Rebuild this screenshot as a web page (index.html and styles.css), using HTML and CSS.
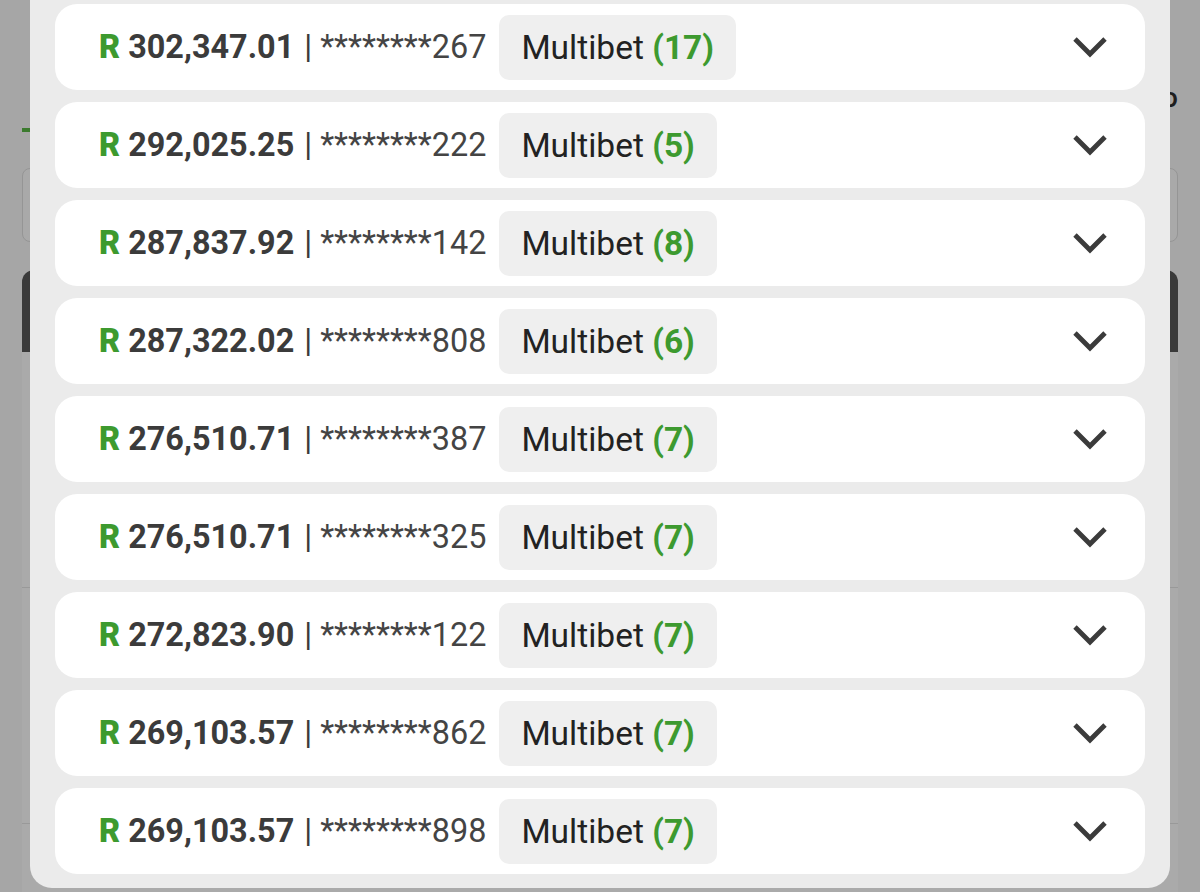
FILE: index.html
```html
<!DOCTYPE html>
<html lang="en">
<head>
<meta charset="utf-8">
<title>Multibet list</title>
<link rel="stylesheet" href="styles.css">
</head>
<body>
<div class="page">
  <div class="bg-header"><span class="bg-title">Info</span></div>
  <div class="bg-tabs"><span class="bg-tab-line"></span></div>
  <div class="bg-input"></div>
  <div class="bg-card"></div>
  <div class="bg-list">
    <div class="bg-item"></div>
    <div class="bg-item"></div>
    <div class="bg-item"></div>
  </div>
</div>

<div class="modal">
  <div class="list">
    <div class="row"><span class="amount"><b class="cur">R</b> 302,347.01</span><span class="sep">|</span><span class="acct">********267</span><span class="badge">Multibet <b>(17)</b></span><svg class="chev" viewBox="0 0 36 22"><path d="M3 3 L18 18 L33 3"/></svg></div>
    <div class="row"><span class="amount"><b class="cur">R</b> 292,025.25</span><span class="sep">|</span><span class="acct">********222</span><span class="badge">Multibet <b>(5)</b></span><svg class="chev" viewBox="0 0 36 22"><path d="M3 3 L18 18 L33 3"/></svg></div>
    <div class="row"><span class="amount"><b class="cur">R</b> 287,837.92</span><span class="sep">|</span><span class="acct">********142</span><span class="badge">Multibet <b>(8)</b></span><svg class="chev" viewBox="0 0 36 22"><path d="M3 3 L18 18 L33 3"/></svg></div>
    <div class="row"><span class="amount"><b class="cur">R</b> 287,322.02</span><span class="sep">|</span><span class="acct">********808</span><span class="badge">Multibet <b>(6)</b></span><svg class="chev" viewBox="0 0 36 22"><path d="M3 3 L18 18 L33 3"/></svg></div>
    <div class="row"><span class="amount"><b class="cur">R</b> 276,510.71</span><span class="sep">|</span><span class="acct">********387</span><span class="badge">Multibet <b>(7)</b></span><svg class="chev" viewBox="0 0 36 22"><path d="M3 3 L18 18 L33 3"/></svg></div>
    <div class="row"><span class="amount"><b class="cur">R</b> 276,510.71</span><span class="sep">|</span><span class="acct">********325</span><span class="badge">Multibet <b>(7)</b></span><svg class="chev" viewBox="0 0 36 22"><path d="M3 3 L18 18 L33 3"/></svg></div>
    <div class="row"><span class="amount"><b class="cur">R</b> 272,823.90</span><span class="sep">|</span><span class="acct">********122</span><span class="badge">Multibet <b>(7)</b></span><svg class="chev" viewBox="0 0 36 22"><path d="M3 3 L18 18 L33 3"/></svg></div>
    <div class="row"><span class="amount"><b class="cur">R</b> 269,103.57</span><span class="sep">|</span><span class="acct">********862</span><span class="badge">Multibet <b>(7)</b></span><svg class="chev" viewBox="0 0 36 22"><path d="M3 3 L18 18 L33 3"/></svg></div>
    <div class="row"><span class="amount"><b class="cur">R</b> 269,103.57</span><span class="sep">|</span><span class="acct">********898</span><span class="badge">Multibet <b>(7)</b></span><svg class="chev" viewBox="0 0 36 22"><path d="M3 3 L18 18 L33 3"/></svg></div>
  </div>
</div>
</body>
</html>
```

FILE: styles.css
```css
html, body {
  margin: 0;
  padding: 0;
  height: 100%;
  overflow: hidden;
  background: #a6a6a6;
  font-family: Roboto, "Noto Sans", "Liberation Sans", sans-serif;
}

.page {
  height: 100%;
  overflow: hidden;
  padding: 0 22px;
  display: flex;
  flex-direction: column;
}

.bg-header {
  height: 128px;
  box-sizing: border-box;
  padding-top: 80px;
  display: flex;
  justify-content: flex-end;
  align-items: flex-start;
  flex-shrink: 0;
}

.bg-title {
  font-size: 28px;
  line-height: 36px;
  color: #1e1e1e;
  font-weight: 500;
}

.bg-tabs {
  height: 4px;
  display: flex;
  flex-shrink: 0;
}

.bg-tab-line {
  width: 120px;
  height: 4px;
  background: #3b7a2e;
}

.bg-input {
  margin-top: 36px;
  height: 72px;
  flex-shrink: 0;
  border: 1px solid #959595;
  border-radius: 8px;
  background: #a9a9a9;
}

.bg-card {
  margin-top: 28px;
  height: 82px;
  flex-shrink: 0;
  background: #3a3a3a;
  border-radius: 12px 12px 0 0;
}

.bg-list {
  background: #aaaaaa;
  display: flex;
  flex-direction: column;
  flex: 1;
}

.bg-item {
  height: 235px;
  flex-shrink: 0;
  border-bottom: 1px solid #999;
}

.modal {
  position: fixed;
  left: 30px;
  top: 0;
  width: 1140px;
  height: 888px;
  box-sizing: border-box;
  background: #ebebeb;
  border-radius: 0 0 22px 22px;
  padding: 4px 25px 14px;
}

.list {
  display: flex;
  flex-direction: column;
  gap: 12px;
}

.row {
  height: 86px;
  background: #ffffff;
  border-radius: 22px;
  display: flex;
  align-items: center;
  padding: 0 37px 0 44px;
  box-sizing: border-box;
  font-size: 32.4px;
  color: #3b3b3b;
}

.amount {
  font-weight: 700;
  color: #3b3b3b;
}

.cur {
  color: #3d9a2f;
}

.sep {
  margin: 0 8px 0 10px;
  font-weight: 400;
  color: #3b3b3b;
}

.acct {
  font-weight: 400;
  color: #444;
}

.badge {
  margin-left: 13px;
  height: 65px;
  padding: 0 22px;
  display: flex;
  align-items: center;
  background: #efefef;
  border-radius: 10px;
  color: #222;
  font-weight: 400;
  font-size: 33.5px;
  white-space: pre;
}

.badge b {
  color: #3d9a2f;
  font-weight: 700;
}

.chev {
  margin-left: auto;
  width: 36px;
  height: 22px;
  fill: none;
  stroke: #3b3b3b;
  stroke-width: 4.8;
}
```
